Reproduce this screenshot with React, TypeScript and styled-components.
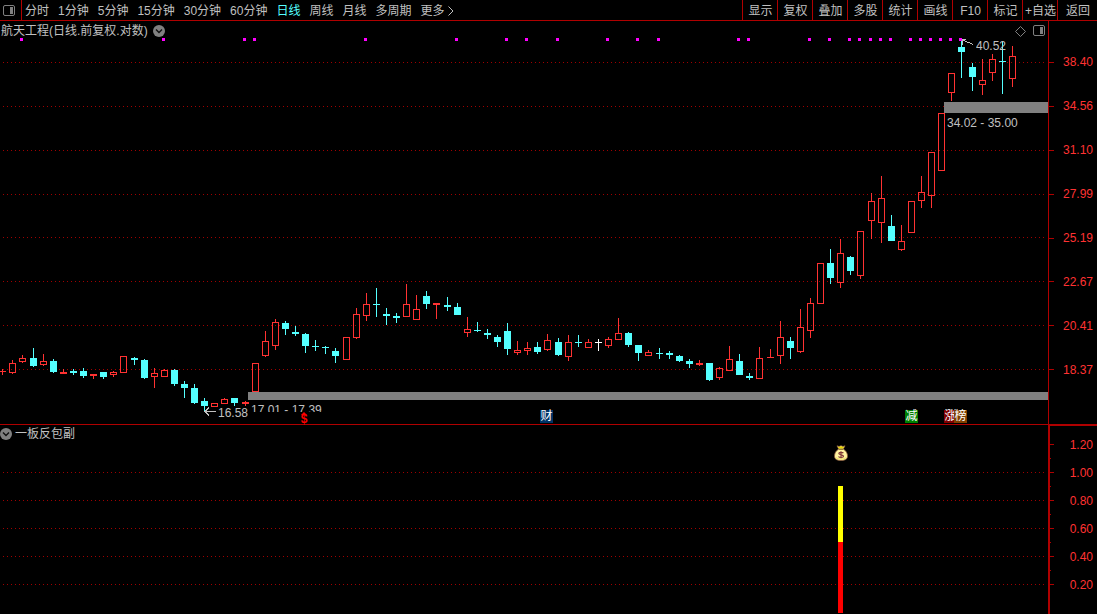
import React from 'react';
import styled, { createGlobalStyle } from 'styled-components';

const color = {
  line: '#b00000',
  grid: '#a00000',
  up: '#ff3232',
  down: '#54ffff',
  flat: '#ffffff',
  text: '#c0c0c0',
  gray: '#808080',
  signal: '#ff00ff',
};

const PLOT_WIDTH = 1048;
const MAIN_HEIGHT = 403;
const SUB_HEIGHT = 189;
const percent = (x: number) => `${(x / PLOT_WIDTH) * 100}%`;

const GlobalStyle = createGlobalStyle`
  * { box-sizing: border-box; }
  body { margin: 0; background: #000; }
  button {
    margin: 0;
    padding: 0;
    border: 0;
    background: none;
    color: inherit;
    font: inherit;
    white-space: nowrap;
    cursor: pointer;
  }
  svg { display: block; }
`;

const Screen = styled.div`
  display: flex;
  flex-direction: column;
  min-height: 100vh;
  background: #000;
  color: ${color.text};
  font: 12px/16px 'Liberation Sans', 'Noto Sans CJK SC', sans-serif;
  overflow: hidden;
`;

const Toolbar = styled.header`
  display: flex;
  height: 21px;
  border-bottom: 1px solid ${color.line};
`;

const LayoutButton = styled.button`
  width: 22px;
  padding: 1px 0 0 3px;
  border-right: 1px solid ${color.line};
`;

const Periods = styled.nav`
  display: flex;
  flex: 1;
  gap: 9px;
  padding-left: 3px;
`;

const PeriodButton = styled.button<{ $active?: boolean }>`
  display: flex;
  align-items: center;
  gap: 3px;
  padding-top: 2px;
  color: ${({ $active }) => ($active ? color.down : color.text)};
`;

const Tools = styled.nav`
  display: flex;
`;

const ToolButton = styled.button<{ $last?: boolean }>`
  width: ${({ $last }) => ($last ? 40 : 35)}px;
  padding: 2px 0 0 1px;
  border-left: 1px solid ${color.line};
`;

const Panel = styled.section`
  display: flex;
`;

const MainPlot = styled.div`
  position: relative;
  flex: 1;
  height: 404px;
  border-bottom: 1px solid ${color.line};
`;

const SubPlot = styled.div`
  position: relative;
  flex: 1;
  height: 189px;
`;

const PlotHeader = styled.div<{ $main?: boolean }>`
  position: absolute;
  inset: 0 0 auto;
  display: flex;
  align-items: center;
  height: ${({ $main }) => ($main ? 20 : 18)}px;
  padding-left: ${({ $main }) => ($main ? 1 : 0)}px;
  gap: ${({ $main }) => ($main ? 5 : 3)}px;
`;

const PlotTitle = styled.h2`
  margin: 0;
  font-size: 12px;
  font-weight: 400;
`;

const HeaderTools = styled.div`
  display: flex;
  align-items: center;
  gap: 7px;
  margin-left: auto;
  padding-right: 2px;
`;

const Note = styled.span<{ $x: number; $y: number; $clip?: boolean }>`
  position: absolute;
  left: ${({ $x }) => percent($x)};
  top: ${({ $y }) => $y}px;
  height: ${({ $clip }) => ($clip ? 10 : 16)}px;
  overflow: hidden;
  font-size: 12px;
  white-space: pre;
`;

const Badge = styled.button<{ $x: number; $fill: string }>`
  position: absolute;
  left: ${({ $x }) => percent($x)};
  top: 389px;
  width: 13px;
  height: 13px;
  background: ${({ $fill }) => $fill};
  color: #fff;
  line-height: 13px;
`;

const DividendMark = styled.button`
  position: absolute;
  left: ${percent(300)};
  top: 391px;
  display: flex;
  flex-direction: column;
  align-items: center;
  width: 8px;
  height: 12px;
  color: #ff0000;
  font-size: 12px;
  font-weight: 700;
  line-height: 9px;
`;

const MainAxis = styled.ol`
  display: flex;
  flex-direction: column;
  width: 49px;
  height: 404px;
  margin: 0;
  padding: 19px 0 33px;
  border-left: 1px solid ${color.line};
  border-bottom: 1px solid ${color.line};
  list-style: none;
`;

const SubAxis = styled.ol`
  width: 49px;
  margin: 0;
  padding: 4px 0 0;
  border-left: 2px solid ${color.line};
  border-top: 1px solid ${color.line};
  list-style: none;
`;

const AxisLabel = styled.li<{ $minor?: boolean }>`
  position: relative;
  display: flex;
  flex: 1;
  align-items: center;
  justify-content: flex-end;
  height: 28px;
  padding: 1px 4px 0 0;
  color: ${color.up};
  font-size: 12px;

  &::before {
    content: '';
    position: absolute;
    left: 0;
    top: ${({ $minor }) => ($minor ? 14 : 22)}px;
    width: ${({ $minor }) => ($minor ? 4 : 5)}px;
    height: 1px;
    background: ${color.line};
  }

  &::after {
    content: '';
    position: absolute;
    display: ${({ $minor }) => ($minor ? 'block' : 'none')};
    left: 0;
    top: 28px;
    width: 1px;
    height: 1px;
    background: ${color.line};
  }

  &:last-child::after { display: none; }
`;

type Kind = 'u' | 'd' | 'f';
// [centre x, high, low, body top, body bottom, kind], measured from the window's top
type Candle = [number, number, number, number, number, Kind];

const candles: Candle[] = [
  [2, 369, 375, 371, 372, 'u'], [12, 360, 374, 363, 373, 'u'], [22, 355, 363, 358, 362, 'u'],
  [33, 348, 367, 358, 366, 'd'], [43, 354, 366, 361, 365, 'u'], [53, 359, 373, 361, 372, 'd'],
  [63, 369, 374, 372, 374, 'u'], [73, 369, 375, 371, 373, 'd'], [83, 368, 378, 371, 376, 'd'],
  [93, 374, 379, 374, 376, 'u'], [103, 372, 379, 372, 377, 'd'], [113, 371, 377, 372, 375, 'u'],
  [123, 356, 373, 356, 373, 'u'], [134, 357, 365, 358, 360, 'd'], [144, 359, 379, 360, 378, 'd'],
  [154, 368, 388, 373, 377, 'u'], [164, 369, 377, 370, 377, 'u'], [174, 369, 386, 370, 384, 'd'],
  [184, 381, 398, 384, 388, 'd'], [194, 384, 404, 388, 403, 'd'], [204, 398, 411, 401, 406, 'd'],
  [214, 403, 407, 403, 407, 'u'], [224, 398, 404, 399, 404, 'u'], [234, 398, 406, 398, 403, 'd'],
  [245, 401, 406, 402, 404, 'u'], [255, 363, 392, 363, 392, 'u'], [265, 331, 357, 341, 356, 'u'],
  [275, 319, 350, 322, 346, 'u'], [285, 321, 335, 323, 329, 'd'], [295, 326, 336, 332, 334, 'd'],
  [305, 333, 353, 334, 346, 'd'], [315, 340, 351, 346, 347, 'd'], [325, 346, 354, 347, 348, 'd'],
  [335, 348, 363, 351, 356, 'd'], [346, 337, 360, 337, 360, 'u'], [356, 308, 339, 314, 338, 'u'],
  [366, 293, 321, 304, 316, 'u'], [376, 288, 317, 304, 305, 'd'], [386, 308, 325, 314, 316, 'd'],
  [396, 313, 323, 316, 318, 'd'], [406, 284, 317, 304, 317, 'u'], [416, 295, 320, 309, 320, 'u'],
  [426, 291, 309, 296, 304, 'd'], [436, 303, 319, 303, 305, 'u'], [447, 297, 311, 305, 307, 'd'],
  [457, 303, 315, 307, 315, 'd'], [467, 317, 337, 329, 333, 'u'], [477, 322, 332, 330, 331, 'd'],
  [487, 329, 339, 333, 335, 'd'], [497, 335, 347, 337, 342, 'd'], [507, 323, 355, 331, 349, 'd'],
  [517, 341, 355, 350, 353, 'u'], [527, 342, 355, 348, 351, 'u'], [537, 342, 354, 347, 352, 'd'],
  [547, 334, 351, 340, 350, 'u'], [558, 338, 356, 342, 355, 'd'], [568, 335, 361, 342, 357, 'u'],
  [578, 335, 347, 342, 343, 'd'], [588, 339, 348, 342, 348, 'u'], [598, 339, 351, 342, 343, 'f'],
  [608, 337, 348, 339, 346, 'u'], [618, 318, 340, 333, 340, 'u'], [628, 332, 347, 333, 345, 'd'],
  [638, 345, 361, 345, 353, 'd'], [648, 350, 356, 352, 356, 'u'], [659, 348, 359, 353, 354, 'd'],
  [669, 351, 359, 353, 355, 'd'], [679, 355, 362, 356, 361, 'd'], [689, 359, 368, 361, 364, 'd'],
  [699, 360, 366, 363, 365, 'u'], [709, 363, 381, 363, 380, 'd'], [719, 367, 380, 368, 378, 'u'],
  [729, 346, 371, 359, 371, 'u'], [739, 354, 375, 361, 375, 'd'], [749, 373, 380, 376, 378, 'd'],
  [759, 347, 379, 358, 379, 'u'], [770, 349, 358, 357, 358, 'u'], [780, 321, 364, 337, 356, 'u'],
  [790, 337, 359, 341, 348, 'd'], [800, 309, 353, 327, 352, 'u'], [810, 298, 338, 303, 331, 'u'],
  [820, 263, 304, 263, 304, 'u'], [830, 249, 284, 263, 278, 'd'], [840, 239, 288, 253, 283, 'u'],
  [850, 256, 275, 257, 271, 'd'], [860, 231, 279, 231, 276, 'u'], [871, 193, 239, 201, 221, 'u'],
  [881, 176, 243, 198, 223, 'u'], [891, 215, 241, 226, 241, 'd'], [901, 225, 251, 241, 250, 'u'],
  [911, 201, 233, 201, 233, 'u'], [921, 176, 208, 192, 201, 'u'], [931, 152, 208, 152, 196, 'u'],
  [941, 113, 171, 113, 171, 'u'], [951, 73, 101, 73, 93, 'u'], [961, 40, 78, 47, 52, 'd'],
  [972, 63, 91, 67, 77, 'd'], [982, 59, 95, 80, 85, 'u'], [992, 54, 81, 59, 73, 'u'],
  [1002, 42, 94, 61, 62, 'd'], [1012, 46, 87, 56, 79, 'u'],
];

const signals = [
  20, 162, 243, 253, 364, 455, 505, 525, 556, 606, 636, 657, 737, 747, 808, 828, 848, 858, 869,
  879, 889, 909, 919, 929, 939, 949, 959,
];

const prices: [string, number][] = [
  ['38.40', 62], ['34.56', 106], ['31.10', 150], ['27.99', 194],
  ['25.19', 237], ['22.67', 281], ['20.41', 325], ['18.37', 369],
];
const levels = ['1.20', '1.00', '0.80', '0.60', '0.40', '0.20'];
const periods = [
  '分时', '1分钟', '5分钟', '15分钟', '30分钟', '60分钟', '日线', '周线', '月线', '多周期',
];
const tools = ['显示', '复权', '叠加', '多股', '统计', '画线', 'F10', '标记', '+自选', '返回'];
const badges: [string, number, string][] = [
  ['财', 540, '#003366'], ['减', 905, '#008000'], ['涨', 944, '#800000'], ['榜', 954, '#804000'],
];

function CandleShape({ candle }: { candle: Candle }) {
  const [x, high, low, top, bottom, kind] = candle;
  const fill = kind === 'u' ? color.up : kind === 'd' ? color.down : color.flat;
  const hollow = kind === 'u' && bottom - top > 2;
  return (
    <g fill={fill}>
      {top > high && <rect x={x} y={high} width={1} height={top - high} />}
      {low > bottom && <rect x={x} y={bottom} width={1} height={low - bottom} />}
      {hollow ? (
        <path
          fillRule="evenodd"
          d={`M${x - 3} ${top}h7V${bottom}h-7ZM${x - 2} ${top + 1}v${bottom - top - 2}h5V${top + 1}Z`}
        />
      ) : (
        <rect x={x - 3} y={top} width={7} height={bottom - top} />
      )}
    </g>
  );
}

function GridLine({ y }: { y: number }) {
  return <path d={`M3 ${y + 0.5}H1047`} stroke={color.grid} strokeDasharray="1 3" />;
}

function SidebarIcon() {
  return (
    <svg width="13" height="12" viewBox="0 0 13 12" aria-hidden="true">
      <rect x="0.5" y="0.5" width="11" height="10" rx="1.5" fill="none" stroke={color.gray} />
      <rect x="7" y="2" width="3" height="7" fill={color.gray} />
    </svg>
  );
}

function DiamondIcon() {
  return (
    <svg width="11" height="11" viewBox="0 0 11 11" aria-hidden="true">
      <path d="M5.5 .5 10.5 5.5 5.5 10.5 .5 5.5Z" fill="none" stroke={color.gray} />
    </svg>
  );
}

function ChevronDisc() {
  return (
    <svg width="12" height="12" viewBox="0 0 12 12" aria-hidden="true">
      <circle cx="6" cy="6" r="6" fill={color.gray} />
      <path d="M3 4.5 6 7.5 9 4.5" fill="none" stroke="#101010" strokeWidth="1.4" />
    </svg>
  );
}

function MoreIcon() {
  return (
    <svg width="6" height="10" viewBox="0 0 6 10" aria-hidden="true">
      <path d="M.5 .5 5 5 .5 9.5" fill="none" stroke={color.text} />
    </svg>
  );
}

const MoneyIcon = styled.svg`
  position: absolute;
  left: ${percent(834)};
  top: 20px;
`;

function MoneyBag() {
  return (
    <MoneyIcon width="14" height="16" viewBox="0 0 14 16" role="img" aria-label="信号">
      <path
        d="M3 .8 5 1.5 7 .7 9 1.5 11 .8 9.3 4C12 5.8 13.5 8.2 13.5 11c0 3-2.200 4.500-6.500 4.500S.5 14 .5 11C.5 8.200 2 5.800 4.700 4Z"
        fill="#fff3a0"
        stroke="#8a5a3c"
        strokeWidth=".8"
      />
      <path d="M3.500 1.200 5 2 7 1.200 9 2 10.500 1.200 9 3.600H5Z" fill="#e8d800" />
      <path d="M4.800 4.200h4.400" stroke="#6b4a00" />
      <path d="M2 12.500c1 2 8.500 2 10 0" fill="none" stroke="#eee06a" strokeWidth="1.200" />
      <path
        d="M9.400 8.200C8.500 6.900 4.800 7 4.800 8.600S9.500 9.600 9.500 11.200 5.300 12.900 4.500 11.500M7 6.300v7"
        fill="none"
        stroke="#803838"
        strokeWidth="1.200"
      />
    </MoneyIcon>
  );
}

export default function App() {
  return (
    <Screen>
      <GlobalStyle />
      <Toolbar>
        <LayoutButton aria-label="布局"><SidebarIcon /></LayoutButton>
        <Periods>
          {periods.map((name) => (
            <PeriodButton key={name} $active={name === '日线'}>{name}</PeriodButton>
          ))}
          <PeriodButton>更多 <MoreIcon /></PeriodButton>
        </Periods>
        <Tools>
          {tools.map((name) => (
            <ToolButton key={name} $last={name === '返回'}>{name}</ToolButton>
          ))}
        </Tools>
      </Toolbar>

      <Panel>
        <MainPlot>
          <svg
            width="100%"
            height={MAIN_HEIGHT}
            viewBox={`0 21 ${PLOT_WIDTH} ${MAIN_HEIGHT}`}
            preserveAspectRatio="none"
            shapeRendering="crispEdges"
          >
            {prices.map(([label, y]) => <GridLine key={label} y={y} />)}
            {candles.map((candle) => <CandleShape key={candle[0]} candle={candle} />)}
            <rect x={944} y={102} width={104} height={11} fill={color.gray} />
            <rect x={248} y={392} width={800} height={8} fill={color.gray} />
            {signals.map((x) => (
              <rect key={x} x={x} y={38} width={3} height={3} fill={color.signal} />
            ))}
            <g fill="none" stroke={color.text}>
              <path d="M962 40.500H964L973 44.500M962 39.500H966M962.500 40V45" />
              <path d="M205 411.500H216M209 407.500 205 411.500 209 415.500" />
            </g>
          </svg>
          <PlotHeader $main>
            <PlotTitle>航天工程(日线.前复权.对数)</PlotTitle>
            <button aria-label="展开"><ChevronDisc /></button>
            <HeaderTools>
              <button aria-label="标记点"><DiamondIcon /></button>
              <button aria-label="侧栏"><SidebarIcon /></button>
            </HeaderTools>
          </PlotHeader>
          <Note $x={976} $y={17}>40.52</Note>
          <Note $x={947} $y={94}>34.02 - 35.00</Note>
          <Note $x={218} $y={384}>16.58</Note>
          <Note $x={251} $y={381} $clip>17.01 - 17.39</Note>
          <DividendMark>
            <svg width="6" height="3" viewBox="0 0 6 3" aria-hidden="true">
              <path d="M3 0 6 3H0Z" fill="#ff0000" />
            </svg>
            $
          </DividendMark>
          {badges.map(([name, x, fill]) => (
            <Badge key={name} $x={x} $fill={fill}>{name}</Badge>
          ))}
        </MainPlot>
        <MainAxis>
          {prices.map(([label]) => <AxisLabel key={label}>{label}</AxisLabel>)}
        </MainAxis>
      </Panel>

      <Panel>
        <SubPlot>
          <svg
            width="100%"
            height={SUB_HEIGHT}
            viewBox={`0 425 ${PLOT_WIDTH} ${SUB_HEIGHT}`}
            preserveAspectRatio="none"
            shapeRendering="crispEdges"
          >
            {[472, 500, 528, 556, 584].map((y) => <GridLine key={y} y={y} />)}
            <rect x={838} y={486} width={5} height={56} fill="#ffff00" />
            <rect x={838} y={542} width={5} height={71} fill="#ff0000" />
          </svg>
          <PlotHeader>
            <button aria-label="展开指标"><ChevronDisc /></button>
            <PlotTitle>一板反包副</PlotTitle>
          </PlotHeader>
          <MoneyBag />
        </SubPlot>
        <SubAxis>
          {levels.map((label) => <AxisLabel key={label} $minor>{label}</AxisLabel>)}
        </SubAxis>
      </Panel>
    </Screen>
  );
}
